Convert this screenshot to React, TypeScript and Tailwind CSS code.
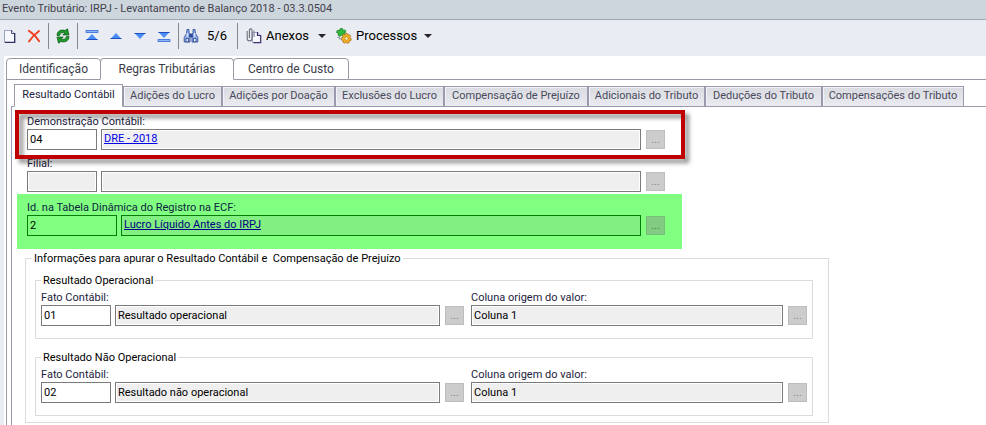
import clsx from "clsx";
import { useState, type ReactNode } from "react";

const MAIN_TABS = [
  { label: "Identificação", width: "w-[95px]" },
  { label: "Regras Tributárias", width: "w-[134px]" },
  { label: "Centro de Custo", width: "w-[116px]" },
];

const RULE_TABS = [
  { label: "Resultado Contábil", width: "w-[109px]" },
  { label: "Adições do Lucro", width: "w-[99px]" },
  { label: "Adições por Doação", width: "w-[113px]" },
  { label: "Exclusões do Lucro", width: "w-[109px]" },
  { label: "Compensação de Prejuízo", width: "w-[144px]" },
  { label: "Adicionais do Tributo", width: "w-[117px]" },
  { label: "Deduções do Tributo", width: "w-[117px]" },
  { label: "Compensações do Tributo", width: "w-[142px]" },
];

function NewIcon() {
  return (
    <svg width="12" height="14" viewBox="0 0 12 14">
      <path d="M.5 1.500h7l3 3v9H.5z" fill="#f8f9ff" stroke="#9aa2c2" />
      <path d="M7.500 1v3.500H11" fill="none" stroke="#4a4f80" />
      <path d="M10.700 4v9.300H1" fill="none" stroke="#2c3060" strokeWidth="1.300" />
    </svg>
  );
}

function DeleteIcon() {
  return (
    <svg width="14" height="14" viewBox="0 0 14 14" fill="none" stroke="#f2401f" strokeLinecap="round">
      <path d="M1.800 1.800c3.500 2.200 7.500 6.200 10.400 10.400" strokeWidth="1.900" />
      <path d="M12 2C8 5 4.500 8.500 2 12.500" strokeWidth="1.900" />
    </svg>
  );
}

function RefreshIcon() {
  return (
    <svg width="14" height="16" viewBox="0 0 14 16" fill="#1d9a29" stroke="#075210" strokeWidth=".7" strokeLinejoin="round">
      <path d="M1 7.500C1 3 5 1.200 9 2.500L11.500.8 13 7H6.800l2-2C6.500 4 4.300 5 3.500 7.500z" />
      <path d="M13 8.500c0 4.500-4 6.300-8 5L2.500 15.200 1 9h6.200l-2 2c2.300 1 4.500 0 5.300-2.500z" />
    </svg>
  );
}

type ArrowIconProps = { down?: boolean; bar?: boolean };

function ArrowIcon({ down, bar }: ArrowIconProps) {
  return (
    <svg width="14" height="14" viewBox="0 0 14 14" className={clsx(down && "-scale-y-100")}>
      {bar && <path d="M1 1.500h12v2H1z" fill="#8db8f8" stroke="#2f66d4" strokeWidth=".8" />}
      <path d={bar ? "M7 5 12.500 11h-11z" : "M7 4 12.500 10h-11z"} fill="#4b8cf5" />
      <path d={bar ? "M1.500 10.500h11" : "M1.500 9.500h11"} stroke="#1d4cc0" />
    </svg>
  );
}

function SearchIcon() {
  return (
    <svg width="16" height="16" viewBox="0 0 16 16" stroke="#27428f" strokeWidth=".8">
      <path d="M4 1.500h2v3l1 2v7.500H1.200V9.500l2.300-4z" fill="#8fb0ec" />
      <path d="M12 1.500h-2v3l-1 2v7.500h5.800V9.500l-2.300-4z" fill="#8fb0ec" />
      <path d="M6.800 6h2.400v3H6.800z" fill="#35549f" />
      <path d="M3 10.500h2.500v3.300H3zM10.500 10.500H13v3.300h-2.500z" fill="#f0f5ff" />
      <path d="M4.300 5v3.500M11.700 5v3.500" stroke="#e6eeff" strokeWidth="1.200" />
    </svg>
  );
}

function AttachIcon() {
  return (
    <svg width="16" height="16" viewBox="0 0 16 16" fill="none">
      <path d="M6.500 4.500h5l3 3v7h-8z" fill="#f6f7ff" stroke="#a2a4d0" />
      <path d="M11.500 4v3.500h3M14.700 7v7.700H7.500" stroke="#3a3270" strokeWidth="1.200" />
      <path
        d="M1.200 3v7.500a2.400 2.400 0 0 0 4.800 0V2.200a1.300 1.300 0 0 0-2.600 0V10"
        stroke="#6a707c"
        strokeWidth="1.100"
      />
      <path d="M8 2.500v6.500" stroke="#6a707c" />
    </svg>
  );
}

function ProcessIcon() {
  return (
    <svg width="16" height="16" viewBox="0 0 16 16">
      <path
        d="M4 .7 6.500.5l.6 1.700 2-.2.8 2.200-1.700 1 .6 1.800-2 1.300L5.400 7 4 8.500 2 7.300l.4-1.900L.5 4.500l.7-2.200 2.100.3z"
        fill="#2fb83a"
        stroke="#1b7d25"
        strokeWidth=".7"
      />
      <path
        d="m9.200 5.600 2.200-.1.500 1.600 1.600-.5 1.300 1.800-1.100 1.300 1.600.9-.5 2.200-1.700.2.100 1.600-2.100.8-1.100-1.300-1.300 1.200-1.900-1.200.5-1.600-1.700-.4-.2-2.200 1.600-.6-.7-1.600 1.600-1.500 1.300.9z"
        fill="#f3b02a"
        stroke="#a96d10"
        strokeWidth=".7"
      />
      <circle cx="10.500" cy="10.500" r="1.700" fill="#fff0b8" stroke="#a96d10" strokeWidth=".6" />
      <path d="M1.500 9.500h2v1.500h2" fill="none" stroke="#8e8e98" />
    </svg>
  );
}

function Caret() {
  return (
    <svg width="8" height="4" viewBox="0 0 8 4" className="shrink-0">
      <path d="M0 0h8L4 4z" fill="#26262a" />
    </svg>
  );
}

function ToolButton({ label, children }: { label: string; children: ReactNode }) {
  return (
    <button type="button" aria-label={label} className="flex h-6 w-6 shrink-0 items-center justify-center">
      {children}
    </button>
  );
}

function Separator() {
  return <span className="mx-0.5 h-[26px] w-px shrink-0 bg-[#85878d]" />;
}

type FieldProps = {
  id: string;
  value?: string;
  label?: string;
  readOnly?: boolean;
  marked?: boolean;
  className?: string;
};

function Field({ id, value = "", label, readOnly, marked, className }: FieldProps) {
  return (
    <input
      id={id}
      aria-label={label}
      defaultValue={value}
      readOnly={readOnly}
      className={clsx(
        "h-[21px] min-w-0 border px-0.5 text-black outline-none",
        marked
          ? "border-[#067c06] bg-[#80ff80]"
          : "border-[#7b7b7b] shadow-[inset_0_0_0_1px_#fff]",
        !marked && (readOnly ? "bg-[#efefef]" : "bg-white"),
        className
      )}
    />
  );
}

function LinkField({ text, marked }: { text: string; marked?: boolean }) {
  return (
    <div
      className={clsx(
        "flex h-[21px] min-w-0 flex-1 items-center border px-0.5",
        marked
          ? "border-[#067c06] bg-[#82ef82] text-[#000080]"
          : "border-[#7b7b7b] bg-[#efefef] text-[#0000e6] shadow-[inset_0_0_0_1px_#fff]"
      )}
    >
      <a href="#" className="underline">
        {text}
      </a>
    </div>
  );
}

function BrowseButton({ marked }: { marked?: boolean }) {
  return (
    <button
      type="button"
      disabled
      aria-label="Procurar"
      className={clsx(
        "ml-[5px] h-[19px] w-[19px] shrink-0 border leading-[17px]",
        marked
          ? "border-[#78bd78] bg-[#82cb82] text-[#4c854c]"
          : "border-[#bdbdbd] bg-[#cccccc] text-[#85858b]"
      )}
    >
      ...
    </button>
  );
}

type ResultGroupProps = {
  id: string;
  title: string;
  code: string;
  description: string;
};

function ResultGroup({ id, title, code, description }: ResultGroupProps) {
  return (
    <fieldset className="min-w-0 border border-[#dcdcdc] px-[5px] pt-1 pb-3">
      <legend className="px-0.5 leading-[13px] text-black">{title}</legend>
      <div className="grid grid-cols-[423fr_336fr] gap-[7px]">
        <div>
          <label htmlFor={`${id}-fato`} className="block leading-[14px]">
            Fato Contábil:
          </label>
          <div className="flex items-center">
            <Field id={`${id}-fato`} value={code} className="mr-1 w-[70px]" />
            <Field id={`${id}-descricao`} label="Descrição" value={description} readOnly className="flex-1" />
            <BrowseButton />
          </div>
        </div>
        <div>
          <label htmlFor={`${id}-coluna`} className="block leading-[14px]">
            Coluna origem do valor:
          </label>
          <div className="flex items-center">
            <Field id={`${id}-coluna`} value="Coluna 1" readOnly className="flex-1" />
            <BrowseButton />
          </div>
        </div>
      </div>
    </fieldset>
  );
}

export default function App() {
  const [mainTab, setMainTab] = useState(1);
  const [ruleTab, setRuleTab] = useState(0);

  return (
    <div className="flex min-h-screen flex-col bg-[#e9ecf2] font-['Roboto','Liberation_Sans',sans-serif] text-[11px] text-[#1d1d40]">
      <header className="h-5 border-b border-[#a2a6ae] bg-[#cdd5dd] px-0.5">
        <h1 className="leading-[18px] text-[#42424c]">
          Evento Tributário: IRPJ - Levantamento de Balanço 2018 - 03.3.0504
        </h1>
      </header>

      <div className="flex h-9 items-center pb-1 text-[13px] text-black">
        <button type="button" aria-label="Novo" className="mr-0.5 flex h-6 w-5 items-center justify-center">
          <NewIcon />
        </button>
        <ToolButton label="Excluir">
          <DeleteIcon />
        </ToolButton>
        <Separator />
        <ToolButton label="Atualizar">
          <RefreshIcon />
        </ToolButton>
        <Separator />
        <ToolButton label="Primeiro">
          <ArrowIcon bar />
        </ToolButton>
        <ToolButton label="Anterior">
          <ArrowIcon />
        </ToolButton>
        <ToolButton label="Próximo">
          <ArrowIcon down />
        </ToolButton>
        <ToolButton label="Último">
          <ArrowIcon down bar />
        </ToolButton>
        <Separator />
        <button type="button" aria-label="Localizar" className="flex h-6 w-5 items-center justify-center">
          <SearchIcon />
        </button>
        <span className="w-[34px] pl-1.5">5/6</span>
        <Separator />
        <button type="button" className="ml-1.5 flex h-6 items-center gap-1">
          <AttachIcon />
          <span className="w-12 text-left">Anexos</span>
          <Caret />
        </button>
        <button type="button" className="ml-2.5 flex h-6 items-center gap-1">
          <ProcessIcon />
          <span className="w-16 text-left">Processos</span>
          <Caret />
        </button>
      </div>

      <main className="ml-1 flex flex-1 flex-col bg-white pt-0.5 pl-0.5">
        <nav className="flex text-xs">
          {MAIN_TABS.map((tab, index) => (
            <button
              key={tab.label}
              type="button"
              onClick={() => setMainTab(index)}
              className={clsx(
                "relative -mb-px -ml-px h-[22px] rounded-t-[4px] border bg-white text-[#3c3c48] first:ml-0",
                mainTab === index ? "z-10 border-[#9a9aa6] border-b-white" : "border-[#9a9aa6]",
                tab.width
              )}
            >
              {tab.label}
            </button>
          ))}
        </nav>

        <div className="flex flex-1 flex-col border-t border-l border-[#9a9aa6] pt-1 pl-1">
          <nav className="flex items-end pl-[3px]">
            {RULE_TABS.map((tab, index) => (
              <button
                key={tab.label}
                type="button"
                onClick={() => setRuleTab(index)}
                className={clsx(
                  "relative -mb-px border whitespace-nowrap",
                  ruleTab === index
                    ? "z-10 h-[23px] border-[#9a9aa6] border-b-white bg-white text-[#1d1d40]"
                    : "h-[21px] border-[#9a9aae] bg-linear-to-b from-[#d9dbe0] to-[#e9ebf0] text-[#48485a] shadow-[inset_1px_1px_0_#f2f3f6]",
                  tab.width
                )}
              >
                {tab.label}
              </button>
            ))}
          </nav>

          <div className="flex-1 border-t border-l border-[#9a9aae] pt-2 pl-[5px]">
            <div className="max-w-[665px]">
              <div className="relative pr-[17px] pb-[7px] pl-2.5">
                <label htmlFor="demonstracao" className="block leading-[14px]">
                  Demonstração Contábil:
                </label>
                <div className="flex items-center">
                  <Field id="demonstracao" value="04" className="mr-1 w-[70px]" />
                  <LinkField text="DRE - 2018" />
                  <BrowseButton />
                </div>
                <div className="pointer-events-none absolute -top-[5px] -right-[3px] -left-0.5 z-10 h-[49px] border-4 border-[#c00000] drop-shadow-[4px_4px_2px_rgba(0,0,0,0.45)]" />
              </div>

              <div className="pr-[17px] pb-0.5 pl-2.5">
                <label htmlFor="filial" className="block leading-[14px]">
                  Filial:
                </label>
                <div className="flex items-center">
                  <Field id="filial" readOnly className="mr-1 w-[70px]" />
                  <Field id="filial-nome" label="Nome da filial" readOnly className="flex-1" />
                  <BrowseButton />
                </div>
              </div>

              <div className="bg-[#80ff80] pt-[7px] pr-[17px] pb-[13px] pl-2.5">
                <label htmlFor="tabela-ecf" className="block leading-[14px] text-[#0c2440]">
                  Id. na Tabela Dinâmica do Registro na ECF:
                </label>
                <div className="flex items-center">
                  <Field id="tabela-ecf" value="2" marked className="mr-1 w-[90px]" />
                  <LinkField text="Lucro Líquido Antes do IRPJ" marked />
                  <BrowseButton marked />
                </div>
              </div>
            </div>

            <fieldset className="mt-[3px] ml-2 flex max-w-[804px] min-w-0 flex-col gap-3 border border-[#dcdcdc] pt-[9px] pr-[15px] pb-1.5 pl-[9px]">
              <legend className="-ml-[3px] px-0.5 leading-[13px] whitespace-pre text-black">
                {"Informações para apurar o Resultado Contábil e  Compensação de Prejuízo"}
              </legend>
              <ResultGroup id="operacional" title="Resultado Operacional" code="01" description="Resultado operacional" />
              <ResultGroup
                id="nao-operacional"
                title="Resultado Não Operacional"
                code="02"
                description="Resultado não operacional"
              />
            </fieldset>
          </div>
        </div>
      </main>
    </div>
  );
}
